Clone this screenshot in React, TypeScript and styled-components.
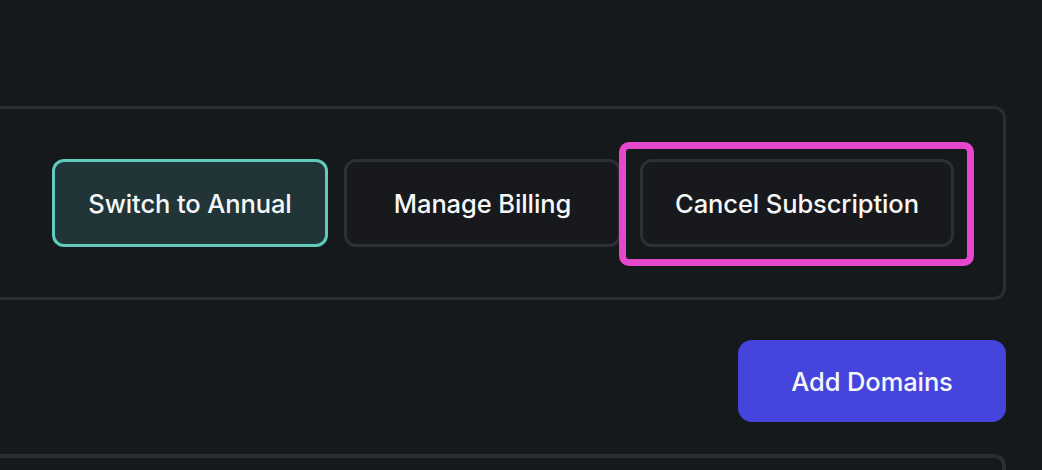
import styled, { createGlobalStyle } from "styled-components";

const GlobalStyle = createGlobalStyle`
  html, body {
    margin: 0;
    padding: 0;
    background: #16191c;
  }
  body {
    font-family: Inter, "Open Sans", "Liberation Sans", sans-serif;
    color: #f4f5f6;
    overflow: hidden;
  }
`;

const Page = styled.div`
  width: 1042px;
  height: 470px;
  box-sizing: border-box;
  padding: 106px 36px 0 0;
  display: flex;
  flex-direction: column;
  overflow: hidden;
`;

const Card = styled.section`
  flex-shrink: 0;
  margin-left: -24px;
  height: 194px;
  box-sizing: border-box;
  border: 3px solid #2a2d32;
  border-radius: 12px;
  display: flex;
  align-items: center;
  justify-content: flex-end;
  padding-right: 49px;
  gap: 16px;
`;

const Button = styled.button<{ $variant?: "accent" | "outline" | "primary"; $width: number }>`
  position: relative;
  flex-shrink: 0;
  width: ${(p) => p.$width}px;
  height: 88px;
  box-sizing: border-box;
  border-radius: 12px;
  border: 3px solid
    ${(p) => (p.$variant === "accent" ? "#62cabc" : p.$variant === "primary" ? "#4545dd" : "#2c2f35")};
  background: ${(p) =>
    p.$variant === "accent" ? "#213538" : p.$variant === "primary" ? "#4545dd" : "#17191d"};
  color: #f6f7f8;
  font-family: inherit;
  font-size: 25.5px;
  font-weight: 500;
  letter-spacing: -0.1px;
  display: flex;
  align-items: center;
  justify-content: center;
  cursor: pointer;
  padding: 0;
`;

const Highlight = styled.span`
  position: absolute;
  left: -24px;
  right: -23px;
  top: -20px;
  bottom: -22px;
  border: 7px solid #e647cc;
  border-radius: 10px;
  pointer-events: none;
`;

const ActionRow = styled.div`
  flex-shrink: 0;
  display: flex;
  justify-content: flex-end;
  margin-top: 40px;
`;

const PrimaryButton = styled(Button)`
  height: 82px;
  border-radius: 14px;
  border: none;
`;

const NextCard = styled.section`
  flex-shrink: 0;
  margin-top: 32px;
  margin-left: -24px;
  height: 60px;
  border: 4px solid #2a2d32;
  border-bottom: none;
  border-radius: 12px 12px 0 0;
`;

export default function App() {
  return (
    <>
      <GlobalStyle />
      <Page>
        <Card>
          <Button $variant="accent" $width={276}>
            Switch to Annual
          </Button>
          <Button $variant="outline" $width={277}>
            Manage Billing
          </Button>
          <Button $variant="outline" $width={314} style={{ marginLeft: 3 }}>
            Cancel Subscription
            <Highlight />
          </Button>
        </Card>
        <ActionRow>
          <PrimaryButton $variant="primary" $width={268}>
            Add Domains
          </PrimaryButton>
        </ActionRow>
        <NextCard />
      </Page>
    </>
  );
}
